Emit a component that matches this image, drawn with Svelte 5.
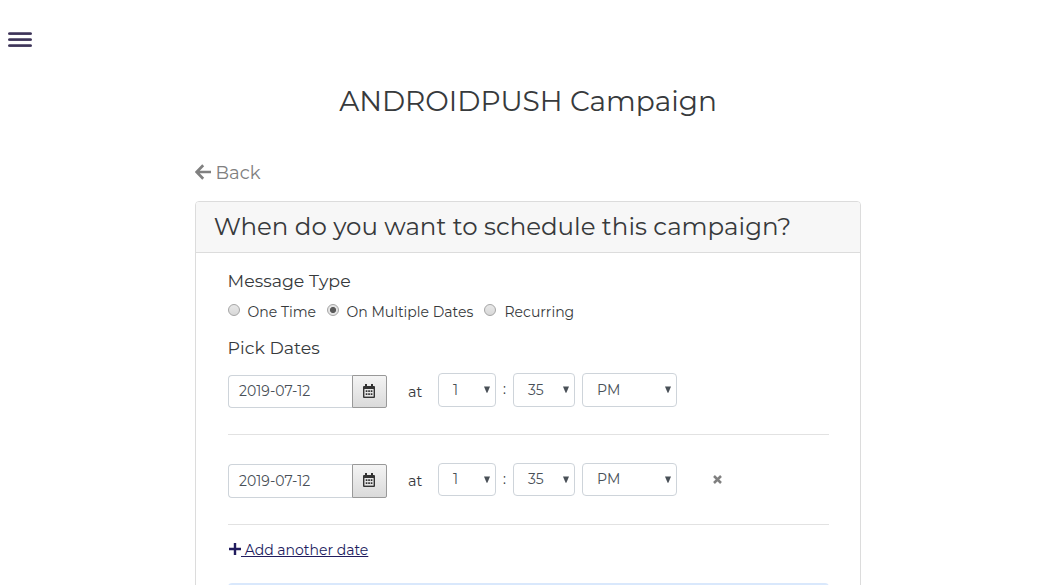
<script>
  const types = [
    { label: 'One Time', cls: 'one' },
    { label: 'On Multiple Dates', cls: 'multi', checked: true },
    { label: 'Recurring', cls: 'rec' }
  ];
  const rows = [
    { date: '2019-07-12', hour: '1', minute: '35', half: 'PM', removable: false },
    { date: '2019-07-12', hour: '1', minute: '35', half: 'PM', removable: true }
  ];
</script>

{#snippet select(value, kind)}
  <div class="select {kind}">
    <span>{value}</span>
    <svg width="6" height="7" viewBox="0 0 6 7"><path d="M0 .5h6L3.4 6.7h-.8z" fill="#495057" /></svg>
  </div>
{/snippet}

<div class="page">
  <button class="menu" aria-label="Menu"><i></i><i></i><i></i></button>
  <main>
    <h1><span>ANDROIDPUSH Campaign</span></h1>
    <div class="back">
      <svg width="16" height="16" viewBox="0 0 16 16"><path d="M8.2 1.2 1.6 8l6.6 6.8M2 8h14" fill="none" stroke="#808080" stroke-width="2.7" /></svg>
      <span>Back</span>
    </div>
    <section class="card">
      <header><span>When do you want to schedule this campaign?</span></header>
      <div class="body">
        <h2 class="type">Message Type</h2>
        <div class="radios">
          {#each types as t}
            <div class="choice {t.cls}">
              <i class="radio" class:checked={t.checked}></i><span>{t.label}</span>
            </div>
          {/each}
        </div>
        <h2 class="pick">Pick Dates</h2>
        {#each rows as r}
          <div class="row" class:second={r.removable}>
            <div class="date"><span>{r.date}</span></div>
            <button class="cal" aria-label="Choose date">
              <svg width="12" height="14" viewBox="0 0 12 14">
                <path d="M2 0h2v2h4V0h2v2h1q1 0 1 1v10q0 1-1 1H1q-1 0-1-1V3q0-1 1-1h1z" fill="#333" />
                <path d="M1.4 5h9.2v7.6H1.4z" fill="#e8e8e8" />
                <path d="M2.7 6.3h1.7v1.7H2.7zM5.2 6.3h1.7v1.7H5.2zM7.7 6.3h1.7v1.7H7.7zM2.7 9.2h1.7v1.7H2.7zM5.2 9.2h1.7v1.7H5.2zM7.7 9.2h1.7v1.7H7.7z" fill="#333" />
              </svg>
            </button>
            <span class="at">at</span>
            {@render select(r.hour, 'hour')}
            <span class="colon">:</span>
            {@render select(r.minute, 'minute')}
            {@render select(r.half, 'half')}
            {#if r.removable}
              <svg class="remove" width="9" height="9" viewBox="0 0 9 9"><path d="m1 1 7 7M8 1 1 8" stroke="#808080" stroke-width="2.5" /></svg>
            {/if}
          </div>
        {/each}
        <div class="add">
          <svg width="12" height="12" viewBox="0 0 12 12"><path d="M6 0v12M0 6h12" stroke="#211c5e" stroke-width="2.4" /></svg>
          <span class="link">&nbsp;Add another date</span>
        </div>
        <div class="notice"></div>
      </div>
    </section>
  </main>
</div>

<style>
  :global(body) { background: #fff; overflow: hidden; }
  .page {
    height: 585px;
    overflow: hidden;
    box-sizing: border-box;
    position: relative;
    font-family: Montserrat, Inter, "Open Sans", sans-serif;
    font-weight: 400;
    color: #373a3c;
  }
  .page * { box-sizing: border-box; }
  span, h1, h2 { white-space: nowrap; }
  svg { display: block; flex: none; }
  button { padding: 0; margin: 0; border: 0; background: none; }
  .menu {
    position: absolute;
    left: 8px;
    top: 32px;
    width: 24px;
    display: flex;
    flex-direction: column;
    gap: 3px;
  }
  .menu i { height: 3px; width: 24px; background: linear-gradient(#6c6581 0 1px, #3d3458 1px 2px, #4b4265 2px); border-radius: 1.5px; }
  main { width: 666px; margin-left: 195px; padding-top: 81px; }
  h1 {
    margin: 0;
    height: 40px;
    line-height: 40px;
    font-size: 28px;
    font-weight: 400;
    text-align: center;
  }
  .back {
    display: flex;
    align-items: center;
    gap: 4.5px;
    height: 24px;
    margin-top: 40px;
    color: #808080;
    font-size: 18px;
  }
  .back svg { margin-top: -2px; }
  .card {
    margin-top: 16px;
    height: 400px;
    border: 1px solid #dcdcdc;
    border-radius: 4px 4px 0 0;
  }
  header {
    height: 51px;
    line-height: 48px;
    padding-left: 17.7px;
    background: #f7f7f7;
    border-bottom: 1px solid #dcdcdc;
    border-radius: 3px 3px 0 0;
    font-size: 24.5px;
  }
  .body { padding: 16px 31px 0 32px; }
  h2 { margin: 0 0 0 -.4px; height: 24px; line-height: 24px; font-size: 17.4px; font-weight: 400; }
  .radios { display: flex; height: 20px; margin-top: 8px; font-size: 14px; line-height: 22px; }
  .choice { display: flex; gap: 7.6px; }
  .one { width: 99px; }
  .multi { width: 157px; }
  .radio {
    flex: none;
    width: 12px;
    height: 12px;
    margin-top: 3px;
    border: 1px solid #a5a5a5;
    border-radius: 50%;
    background: linear-gradient(#e8e8e8, #d8d8d8);
  }
  .radio.checked { background: radial-gradient(circle, #5a5a5a 0 2.7px, #e4e4e4 3.4px); }
  .choice.rec { gap: 8.5px; }
  .pick { margin-top: 15px; }
  .row {
    display: flex;
    align-items: flex-start;
    height: 75px;
    padding-top: 13px;
    border-bottom: 1px solid #e2e2e2;
    font-size: 14px;
  }
  .row.second { height: 90px; padding-top: 28px; }
  .date {
    width: 124px;
    height: 33px;
    margin-top: 2px;
    padding-left: 10px;
    line-height: 31px;
    border: 1px solid #ced4da;
    border-right: 0;
    border-radius: 4px 0 0 4px;
    color: #495057;
  }
  .cal {
    display: flex;
    align-items: center;
    justify-content: center;
    width: 35px;
    height: 33px;
    margin-top: 2px;
    padding-right: 1px;
    padding-bottom: 1px;
    border: 1px solid #999;
    border-radius: 0 2px 2px 0;
    background: linear-gradient(#f4f4f4, #dadada);
  }
  .second .date, .second .cal { height: 34px; margin-top: 1px; }
  .second .date { line-height: 32px; }
  .second .cal { padding-bottom: 2px; }
  .at { width: 30px; margin-left: 21px; line-height: 38px; font-size: 14.4px; }
  .second .at { line-height: 36px; }
  .select {
    display: flex;
    align-items: center;
    justify-content: space-between;
    height: 34px;
    padding: 0 5px 1px 14px;
    border: 1px solid #ced4da;
    border-radius: 4px;
    color: #495057;
  }
  .second .select { height: 33px; }
  .hour { width: 58px; }
  .minute { width: 62px; }
  .half { width: 95px; margin-left: 7px; }
  .colon { width: 17px; text-align: center; line-height: 32px; }
  .remove { margin: 12px 0 0 36px; }
  .add {
    display: flex;
    height: 20px;
    margin-top: 15px;
    color: #211c5e;
    font-size: 14px;
    line-height: 20px;
  }
  .add svg { margin: 3px 0 0 1px; }
  .link { text-decoration: underline; }
  .notice { height: 30px; margin-top: 23px; background: #d9e8fc; border-radius: 4px; }
</style>
